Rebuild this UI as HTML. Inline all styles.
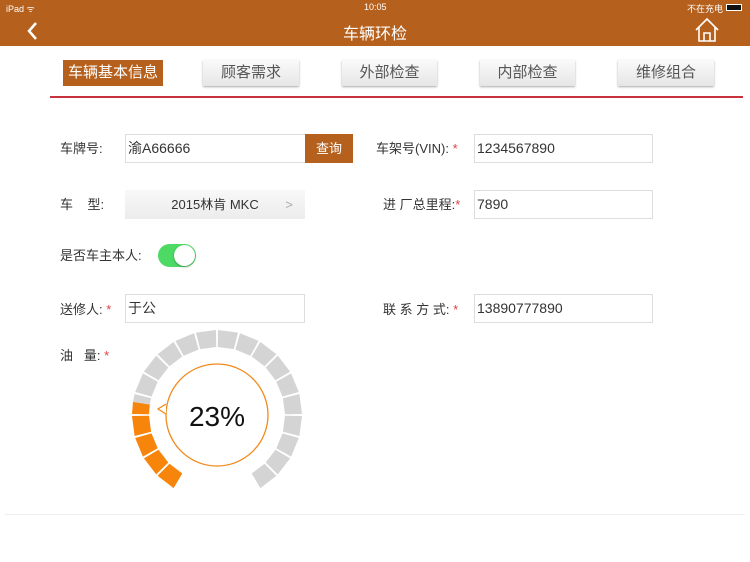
<!DOCTYPE html>
<html><head><meta charset="utf-8"><style>
*{margin:0;padding:0;box-sizing:border-box}
body{width:750px;height:562px;background:#fff;position:relative;overflow:hidden;font-family:"Liberation Sans","Noto Sans CJK SC",sans-serif;color:#333}
.a{position:absolute}
.top{left:0;top:0;width:750px;height:46px;background:#b5601c;color:#fff}
.tab{position:absolute;top:60px;height:26px;font-size:15px;line-height:26px;text-align:center;color:#555;background:linear-gradient(#fafafa,#e6e6e6);box-shadow:0 1px 2px #aaa}
.lbl{position:absolute;font-size:13px;color:#333;line-height:16px}
.inp{position:absolute;border:1px solid #ddd;height:29px;font-size:14px;line-height:27px;padding-left:2px;color:#333}
.st{color:#e04040}
</style></head><body>
<div class="a top">
<div class="a" style="left:6px;top:2px;font-size:9px">iPad ᯤ</div>
<div class="a" style="left:364px;top:2px;font-size:9px">10:05</div>
<div class="a" style="left:687px;top:2px;font-size:9px">不在充电</div>
<div class="a" style="left:726px;top:4px;width:16px;height:7px;background:#111;border:1px solid #fff"></div>
<svg class="a" style="left:25px;top:21px" width="14" height="20"><path d="M11 2 L4 10 L11 18" stroke="#fff" stroke-width="2.5" fill="none"/></svg>
<div class="a" style="left:0;width:750px;top:20px;text-align:center;font-size:16px">车辆环检</div>
<svg class="a" style="left:694px;top:17px" width="26" height="26"><path d="M2 13 L13 2 L24 13 M5 10 V24 H21 V10 M10 24 V16 H16 V24" stroke="#fff" stroke-width="1.6" fill="none"/></svg>
</div>
<div class="tab" style="left:63px;width:100px;background:#b5601c;color:#fff;box-shadow:none">车辆基本信息</div>
<div class="tab" style="left:203px;width:96px">顾客需求</div>
<div class="tab" style="left:342px;width:95px">外部检查</div>
<div class="tab" style="left:480px;width:95px">内部检查</div>
<div class="tab" style="left:618px;width:96px">维修组合</div>
<div class="a" style="left:50px;top:96px;width:693px;height:2px;background:#c8323c"></div>

<div class="lbl" style="left:60px;top:141px">车牌号:</div>
<div class="inp" style="left:125px;top:134px;width:182px">渝A66666</div>
<div class="a" style="left:305px;top:134px;width:48px;height:29px;background:#b5601c;color:#fff;font-size:13px;line-height:29px;text-align:center">查询</div>
<div class="lbl" style="left:376px;top:141px">车架号(VIN): <span class="st">*</span></div>
<div class="inp" style="left:474px;top:134px;width:179px">1234567890</div>

<div class="lbl" style="left:60px;top:197px">车&nbsp;&nbsp;&nbsp;&nbsp;型:</div>
<div class="a" style="left:125px;top:190px;width:180px;height:29px;background:linear-gradient(#f8f8f8,#ececec);font-size:13px;line-height:29px;text-align:center">2015林肯 MKC<span style="position:absolute;right:12px;color:#aaa">&gt;</span></div>
<div class="lbl" style="left:383px;top:197px">进 厂总里程:<span class="st">*</span></div>
<div class="inp" style="left:474px;top:190px;width:179px">7890</div>

<div class="lbl" style="left:60px;top:248px">是否车主本人:</div>
<div class="a" style="left:158px;top:244px;width:38px;height:23px;border-radius:12px;background:#4cd964"></div>
<div class="a" style="left:174px;top:245px;width:21px;height:21px;border-radius:50%;background:#fff;box-shadow:0 1px 2px rgba(0,0,0,.3)"></div>

<div class="lbl" style="left:60px;top:302px">送修人: <span class="st">*</span></div>
<div class="inp" style="left:125px;top:294px;width:180px">于公</div>
<div class="lbl" style="left:383px;top:302px">联 系 方 式: <span class="st">*</span></div>
<div class="inp" style="left:474px;top:294px;width:179px">13890777890</div>

<div class="lbl" style="left:60px;top:348px">油&nbsp;&nbsp;&nbsp;量: <span class="st">*</span></div>
<svg class="a" style="left:0;top:0" width="750" height="562" id="g">
<circle cx="217" cy="415" r="51" stroke="#f08a1c" stroke-width="1.3" fill="none"/>
<path d="M166 404 L158 409 L166 414" stroke="#f08a1c" stroke-width="1.3" fill="#fff"/>
<text x="217" y="426" text-anchor="middle" font-size="28" font-family="Liberation Sans" fill="#111">23%</text>
</svg>
<div class="a" style="left:5px;top:514px;width:740px;height:1px;background:#eee"></div>
<script>
var s=document.getElementById('g'),cx=217,cy=415,R=85,r=68,n=20,w=15,gap=1.4;
function p(a,rr){a=a*Math.PI/180;return (cx+rr*Math.sin(a)).toFixed(1)+' '+(cy-rr*Math.cos(a)).toFixed(1);}
function seg(a1,a2,c){var e=document.createElementNS('http://www.w3.org/2000/svg','path');e.setAttribute('d','M'+p(a1,r)+' L'+p(a1,R)+' L'+p(a2,R)+' L'+p(a2,r)+'Z');e.setAttribute('fill',c);s.appendChild(e);}
for(var i=0;i<n;i++){var a1=-150+i*w+gap/2,a2=-150+(i+1)*w-gap/2;
if(i<4)seg(a1,a2,'#f7850b');else if(i==4){var m=a1+(a2-a1)*0.6;seg(a1,m,'#f7850b');seg(m,a2,'#d4d4d4');}else seg(a1,a2,'#d4d4d4');}
</script>
</body></html>
